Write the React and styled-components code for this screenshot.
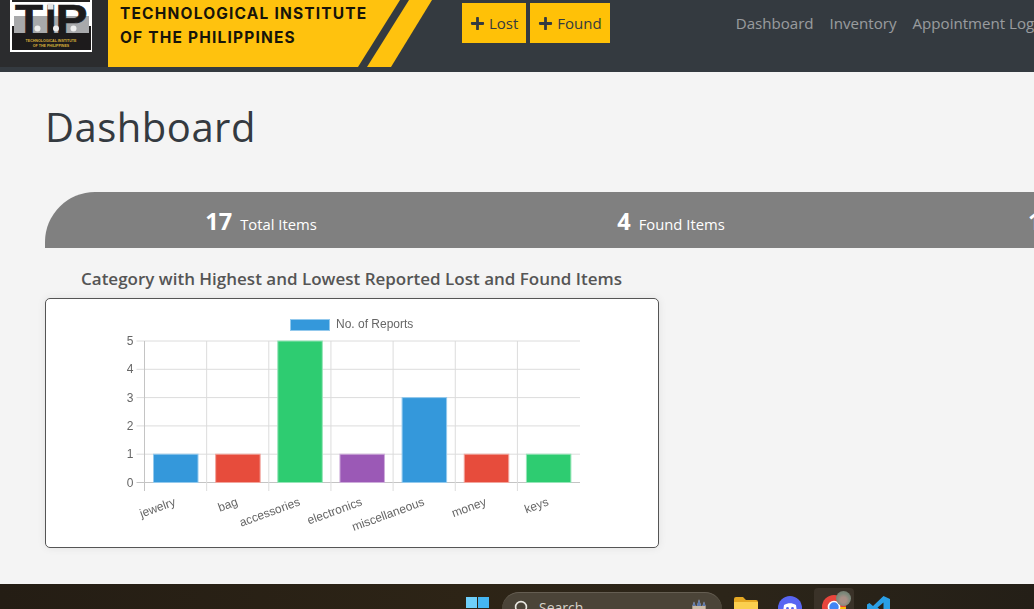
import styled, { createGlobalStyle } from "styled-components";
import { FaPlus } from "react-icons/fa";

const GlobalStyle = createGlobalStyle`
  html, body {
    margin: 0;
    padding: 0;
    background: #f4f4f4;
    font-family: "Open Sans", "Noto Sans", sans-serif;
  }
`

const Screen = styled.div`
  width: 1034px;
  height: 609px;
  overflow: hidden;
  display: flex;
  flex-direction: column;
`

const NavBar = styled.nav`
  height: 72px;
  flex: none;
  display: flex;
  align-items: flex-start;
  background: #343a40;
`
const LogoBlock = styled.div`
  width: 108px;
  height: 67px;
  flex: none;
  background: #2b2c2e;
`
const BannerPanel = styled.div`
  width: 292px;
  height: 67px;
  flex: none;
  box-sizing: border-box;
  padding: 2px 0 0 12px;
  background: #ffc20e;
  clip-path: polygon(0 0, 100% 0, 250px 100%, 0 100%);
  font-family: "Inter", "Liberation Sans", sans-serif;
  font-weight: 700;
  font-size: 15.5px;
  line-height: 24px;
  letter-spacing: 1.18px;
  color: #17140a;
  white-space: nowrap;
`
const BannerStripe = styled.div`
  width: 65px;
  height: 67px;
  flex: none;
  margin-left: -33px;
  background: #ffc20e;
  clip-path: polygon(42px 0, 65px 0, 24px 100%, 0 100%);
`
const ActionGroup = styled.div`
  display: flex;
  gap: 4px;
  margin: 3px 0 0 30px;
`
const ActionButton = styled.button`
  height: 40px;
  box-sizing: border-box;
  padding: 0 8px;
  display: flex;
  align-items: center;
  gap: 4px;
  border: 0;
  background: #ffc107;
  color: #343a40;
  font-family: inherit;
  font-size: 15px;
  svg { width: 15px; height: 15px; }
`
const NavLinks = styled.div`
  display: flex;
  gap: 16px;
  margin: 11px 0 0 126px;
  white-space: nowrap;
`
const NavLink = styled.a`
  font-size: 15.1px;
  line-height: 24px;
  color: rgba(255, 255, 255, 0.5);
`

const Main = styled.main`
  flex: 1;
  min-height: 0;
  padding: 0 0 0 45px;
`
const PageTitle = styled.h1`
  margin: 30px 0 0 0;
  height: 50px;
  font-size: 40px;
  line-height: 50px;
  font-weight: 400;
  letter-spacing: 0.5px;
  color: #343a40;
`
const StatsBar = styled.div`
  width: 1290px;
  height: 56px;
  margin-top: 40px;
  box-sizing: border-box;
  padding-left: 11px;
  display: grid;
  grid-template-columns: repeat(3, 410px);
  background: #808080;
  border-top-left-radius: 50px;
`
const Stat = styled.div`
  display: flex;
  align-items: baseline;
  justify-content: center;
  gap: 8px;
  padding-top: 12px;
  color: #fff;
  font-size: 14.8px;
  line-height: 34px;
`
const StatNumber = styled.b`
  font-size: 23.5px;
  font-weight: 700;
`
const ChartTitle = styled.h2`
  margin: 19px 0 0 36px;
  font-size: 17px;
  line-height: 24px;
  font-weight: 600;
  color: #555;
`
const ChartCard = styled.div`
  width: 614px;
  height: 250px;
  margin-top: 7px;
  box-sizing: border-box;
  border: 1px solid #555;
  border-radius: 5px;
  background: #fff;
  box-shadow: 0 0 8px rgba(0, 0, 0, 0.08);
  svg { display: block; will-change: transform; }
`

const TaskBar = styled.footer`
  height: 25px;
  flex: none;
  overflow: hidden;
  display: flex;
  align-items: flex-start;
  background: linear-gradient(90deg, #241d14 0%, #2d2416 45%, #2c2519 70%, #241f17 100%);
`
const TaskIcon = styled.svg`
  flex: none;
  display: block;
  margin-left: ${props => props.$left}px;
  margin-top: ${props => props.$top}px;
`
const SearchPill = styled.div`
  width: 220px;
  height: 34px;
  flex: none;
  box-sizing: border-box;
  margin: 8px 0 0 13px;
  padding: 5px 13px 0 12px;
  display: flex;
  align-items: flex-start;
  border-radius: 17px;
  border-top: 1px solid #655e52;
  background: #4b4438;
  color: #d6d2ca;
  font-size: 14px;
  line-height: 20px;
`
const SearchText = styled.span`
  margin-left: 9px;
  flex: 1;
`
const ActiveApp = styled.div`
  width: 40px;
  height: 34px;
  flex: none;
  box-sizing: border-box;
  margin: 4px 0 0 12px;
  padding: 7px 0 0 8px;
  border-radius: 4px;
  background: #3a3228;
  display: flex;
  align-items: flex-start;
`
const Avatar = styled.span`
  width: 15px;
  height: 15px;
  flex: none;
  margin: -4px 0 0 -10px;
  border-radius: 50%;
  background: radial-gradient(circle at 50% 60%, #a98f86 0 25%, #7f8a7c 55%, #6a7064 100%);
`

const CATEGORIES = [
  { label: "jewelry", value: 1, color: "#3498db", edge: "#93c9ed" },
  { label: "bag", value: 1, color: "#e74c3c", edge: "#f2a59d" },
  { label: "accessories", value: 5, color: "#2ecc71", edge: "#96e5b8" },
  { label: "electronics", value: 1, color: "#9b59b6", edge: "#cdacda" },
  { label: "miscellaneous", value: 3, color: "#3498db", edge: "#93c9ed" },
  { label: "money", value: 1, color: "#e74c3c", edge: "#f2a59d" },
  { label: "keys", value: 1, color: "#2ecc71", edge: "#96e5b8" },
];

// card inner origin is 46,299 on the page
const AXIS_LEFT = 98.5;
const CELL = 62.15;
const BASE_Y = 183.5;
const ROW = 28.3;

function ReportsChart() {
  const font = { fontFamily: '"Liberation Sans", Arial, sans-serif', fontSize: 12, fill: "#666" };
  return (
    <svg width="612" height="248" viewBox="0 0 612 248">
      <rect x="244.5" y="20.5" width="39" height="11" fill="#3498db" stroke="#93c9ed" />
      <text x="290" y="29" {...font}>No. of Reports</text>
      {[0, 1, 2, 3, 4, 5].map(n => (
        <g key={n}>
          <line x1={AXIS_LEFT - 8} x2="534" y1={BASE_Y - n * ROW} y2={BASE_Y - n * ROW}
            stroke={n === 0 ? "#c4c4c4" : "#dcdcdc"} />
          <text x={AXIS_LEFT - 11} y={BASE_Y - n * ROW + 4} textAnchor="end" {...font}>{n}</text>
        </g>
      ))}
      {CATEGORIES.map((c, i) => (
        <line key={c.label} x1={AXIS_LEFT + i * CELL} x2={AXIS_LEFT + i * CELL} y1="42" y2="192"
          stroke={i === 0 ? "#c4c4c4" : "#dcdcdc"} />
      ))}
      {CATEGORIES.map((c, i) => (
        <rect key={c.label} x={AXIS_LEFT + i * CELL + 9} y={BASE_Y - c.value * ROW}
          width="44.5" height={c.value * ROW} fill={c.color} stroke={c.edge} />
      ))}
      {CATEGORIES.map((c, i) => {
        const x = AXIS_LEFT + i * CELL + 32;
        return (
          <text key={c.label} x={x} y="206" textAnchor="end" transform={`rotate(-20 ${x} 206)`} {...font}>
            {c.label}
          </text>
        );
      })}
    </svg>
  );
}

function TipLogo() {
  const letter = {
    fontFamily: '"Liberation Sans", Arial, sans-serif',
    fontWeight: 700,
    fontSize: 41,
    fill: "#1c1b1c",
    stroke: "#1c1b1c",
    strokeWidth: 0.7,
    lengthAdjust: "spacingAndGlyphs",
  };
  const small = { fontFamily: '"Liberation Sans", Arial, sans-serif', fontWeight: 700, fontSize: 3.6, fill: "#d8b13a", textAnchor: "middle" };
  return (
    <svg width="108" height="67" viewBox="0 0 108 67" style={{ display: "block" }}>
      <rect x="10" y="0" width="82" height="52" fill="#fff" />
      <rect x="12" y="0" width="78" height="2" fill="#222" />
      <rect x="12" y="26" width="79" height="24" fill="#1d1b1c" />
      <rect x="14" y="16" width="75" height="17" fill="#a8a9ab" />
      <text x="15" y="32.500" textLength="28" {...letter}>T</text>
      <text x="45" y="32.500" {...letter}>I</text>
      <text x="55.500" y="32.500" textLength="32" {...letter}>P</text>
      <rect x="47.500" y="3.500" width="6" height="6" fill="#e6e6e6" />
      <circle cx="37.500" cy="28.500" r="3" fill="#eee" />
      <circle cx="56" cy="28.500" r="3" fill="#eee" />
      <circle cx="73.500" cy="28.500" r="3" fill="#eee" />
      <text x="51" y="41.500" {...small}>TECHNOLOGICAL INSTITUTE</text>
      <text x="51" y="46.500" {...small}>OF THE PHILIPPINES</text>
    </svg>
  );
}

export default function App() {
  return <>
    <GlobalStyle />
    <Screen>
      <NavBar>
        <LogoBlock><TipLogo /></LogoBlock>
        <BannerPanel>TECHNOLOGICAL INSTITUTE<br />OF THE PHILIPPINES</BannerPanel>
        <BannerStripe />
        <ActionGroup>
          <ActionButton><FaPlus />Lost</ActionButton>
          <ActionButton><FaPlus />Found</ActionButton>
        </ActionGroup>
        <NavLinks>
          <NavLink>Dashboard</NavLink>
          <NavLink>Inventory</NavLink>
          <NavLink>Appointment Log</NavLink>
        </NavLinks>
      </NavBar>

      <Main>
        <PageTitle>Dashboard</PageTitle>
        <StatsBar>
          <Stat><StatNumber>17</StatNumber>Total Items</Stat>
          <Stat><StatNumber>4</StatNumber>Found Items</Stat>
          <Stat><StatNumber>13</StatNumber>Lost Items</Stat>
        </StatsBar>
        <ChartTitle>Category with Highest and Lowest Reported Lost and Found Items</ChartTitle>
        <ChartCard><ReportsChart /></ChartCard>
      </Main>

      <TaskBar>
        <TaskIcon $left={466} $top={13} width="23" height="23" viewBox="0 0 23 23">
          <rect width="11" height="11" fill="#6fd0fb" />
          <rect x="12" width="11" height="11" fill="#45b6f2" />
          <rect y="12" width="11" height="11" fill="#2f9fe6" />
          <rect x="12" y="12" width="11" height="11" fill="#1f8cd8" />
        </TaskIcon>
        <SearchPill>
          <svg width="16" height="16" viewBox="0 0 16 16" fill="none" stroke="#e8e6e0" strokeWidth="1.6" style={{ flex: "none", marginTop: 2 }}>
            <circle cx="7" cy="7" r="5.4" />
            <path d="M11 11l4 4" />
          </svg>
          <SearchText>Search</SearchText>
          <svg width="20" height="18" viewBox="0 0 18 16" style={{ flex: "none" }}>
            <path d="M3 16V7l1.500-4L6 7h1l2-6 2 6h1l1.500-4L15 7v9z" fill="#c9b9a6" />
            <path d="M3 7l1.500-4L6 7zM7 7l2-6 2 6zM12 7l1.500-4L15 7z" fill="#5c78ad" />
          </svg>
        </SearchPill>
        <TaskIcon $left={12} $top={13} width="24" height="20" viewBox="0 0 24 20">
          <path d="M0 2a2 2 0 0 1 2-2h7l3 3h10a2 2 0 0 1 2 2v15H0z" fill="#e5a823" />
          <rect y="5" width="24" height="15" fill="#fbcf4f" />
        </TaskIcon>
        <TaskIcon $left={20} $top={12} width="24" height="24" viewBox="0 0 24 24">
          <circle cx="12" cy="12" r="12" fill="#5865f2" />
          <path d="M6 9c4-2.400 8-2.400 12 0l1 7-3 1-1-1.600c-2 .6-4 .6-6 0L8 17l-3-1z" fill="#fff" />
          <circle cx="9.500" cy="12.500" r="1.400" fill="#5865f2" />
          <circle cx="14.500" cy="12.500" r="1.400" fill="#5865f2" />
        </TaskIcon>
        <ActiveApp>
          <svg width="24" height="24" viewBox="0 0 24 24" style={{ flex: "none" }}>
            <circle cx="12" cy="12" r="12" fill="#e8453c" />
            <path d="M12 12h12a12 12 0 0 1-12 12z" fill="#fbbc05" />
            <path d="M12 12v12A12 12 0 0 1 1.600 18z" fill="#34a853" />
            <circle cx="12" cy="12" r="5.500" fill="#4285f4" stroke="#fff" strokeWidth="1.600" />
          </svg>
          <Avatar />
        </ActiveApp>
        <TaskIcon $left={13} $top={12} width="23" height="23" viewBox="0 0 23 23">
          <path d="M16.500 0L23 3v17l-6.500 3L6 13l-3.500 3L0 14.500V8.500L2.500 7 6 10zM16.500 6.500L10.500 11.500l6 5z" fill="#2a9fe6" fillRule="evenodd" />
        </TaskIcon>
      </TaskBar>
    </Screen>
  </>
}
